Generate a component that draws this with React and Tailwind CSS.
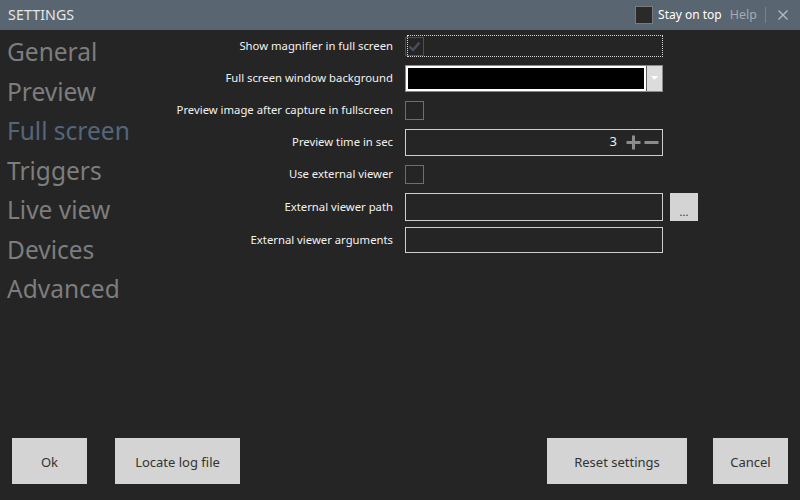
import React from "react";

const font = { fontFamily: '"Noto Sans", "Open Sans", sans-serif' };

function Checkbox({ checked = false, disabled = false }) {
  return (
    <div
      className={
        "w-[19px] h-[19px] border flex items-center justify-center " +
        (disabled ? "border-[#46515c]" : "border-[#6e6e6e]")
      }
    >
      {checked && (
        <svg width="13" height="11" viewBox="0 0 13 11">
          <path d="M1.5 5.5 L5 9 L11.5 1.5" fill="none" stroke="#46515c" strokeWidth="2.4" />
        </svg>
      )}
    </div>
  );
}

function Row({ label, h = "h-[32px]", children }) {
  return (
    <div className={"flex items-center " + h}>
      <div className="w-[224px] text-right text-[11.3px] text-[#f2f2f2] pr-[1px] whitespace-nowrap pt-[1px]">
        {label}
      </div>
      <div className="ml-[11px] flex items-center">{children}</div>
    </div>
  );
}

export default function App() {
  const nav = ["General", "Preview", "Full screen", "Triggers", "Live view", "Devices", "Advanced"];
  return (
    <div className="w-[800px] h-[500px] bg-[#252525] flex flex-col overflow-hidden" style={font}>
      <div className="h-[30px] bg-[#596570] flex items-center shrink-0">
        <div className="pl-[8px] text-[14.2px] text-[#e6e6e6] tracking-[0.1px]">SETTINGS</div>
        <div className="ml-auto flex items-center">
          <div className="w-[18px] h-[18px] bg-[#2a2a2a] border border-[#7a7a7a]" />
          <div className="ml-[5px] text-[12px] text-white">Stay on top</div>
          <div className="ml-[8px] text-[12.5px] text-[#a3acb5]">Help</div>
          <div className="ml-[8px] w-[1px] h-[16px] bg-[#78838e]" />
          <div className="ml-[12px] mr-[12px] text-[#b0b8c0]">
            <svg width="10" height="10" viewBox="0 0 10 10">
              <path d="M0.5 0.5 L9.5 9.5 M9.5 0.5 L0.5 9.5" stroke="#b4bcc4" strokeWidth="1.3" />
            </svg>
          </div>
        </div>
      </div>

      <div className="flex flex-1">
        <div className="w-[170px] pl-[7px] pt-[2px]">
          {nav.map((n) => (
            <div
              key={n}
              className={
                "text-[24.5px] leading-[39.5px] whitespace-nowrap " +
                (n === "Full screen" ? "text-[#55667a]" : "text-[#7d7d7d]")
              }
            >
              {n}
            </div>
          ))}
        </div>

        <div className="flex flex-col">
          <Row label="Show magnifier in full screen">
            <div className="relative w-[258px] h-[22px] flex items-center">
              <Checkbox checked disabled />
              <div className="absolute left-[2px] top-0 w-[256px] h-[22px] border border-dotted border-[#d8d8d8]" />
            </div>
          </Row>
          <Row label="Full screen window background">
            <div className="w-[258px] h-[27px] border border-[#8a8a8a] flex">
              <div className="flex-1 bg-white p-[2px]">
                <div className="w-full h-full bg-black" />
              </div>
              <div className="w-[16px] bg-[#dcdcdc] border-l border-[#606060] flex items-center justify-center">
                <svg width="7" height="5" viewBox="0 0 7 5">
                  <path d="M0 0 L7 0 L3.5 4 Z" fill="#ffffff" />
                </svg>
              </div>
            </div>
          </Row>
          <Row label="Preview image after capture in fullscreen">
            <Checkbox />
          </Row>
          <Row label="Preview time in sec">
            <div className="w-[258px] h-[27px] border border-[#cfcfcf] flex items-center justify-end pr-[3px]">
              <span className="text-[13px] text-[#f0f0f0] mr-[9px]">3</span>
              <svg width="15" height="15" viewBox="0 0 15 15" className="mr-[3px]">
                <path d="M7.5 0.5 V14.5 M0.5 7.5 H14.5" stroke="#8c8c8c" strokeWidth="3" />
              </svg>
              <svg width="15" height="15" viewBox="0 0 15 15">
                <path d="M0.5 7.5 H14.5" stroke="#8c8c8c" strokeWidth="3" />
              </svg>
            </div>
          </Row>
          <Row label="Use external viewer">
            <Checkbox />
          </Row>
          <Row label="External viewer path" h="h-[34px]">
            <div className="w-[258px] h-[28px] border border-[#cfcfcf]" />
            <div className="ml-[7px] w-[28px] h-[28px] bg-[#d4d4d4] flex items-end justify-center pb-[4px]">
              <span className="text-[11px] leading-[11px] text-[#333]">...</span>
            </div>
          </Row>
          <Row label="External viewer arguments">
            <div className="w-[258px] h-[26px] border border-[#cfcfcf]" />
          </Row>
        </div>
      </div>

      <div className="flex items-center px-[12px] pb-[16px] text-[13px] text-[#333]">
        <div className="w-[75px] h-[46px] bg-[#d4d4d4] flex items-center justify-center pt-[3px]">Ok</div>
        <div className="ml-[28px] w-[125px] h-[46px] bg-[#d4d4d4] flex items-center justify-center pt-[3px]">
          Locate log file
        </div>
        <div className="ml-auto w-[140px] h-[46px] bg-[#d4d4d4] flex items-center justify-center pt-[3px]">
          Reset settings
        </div>
        <div className="ml-[26px] w-[75px] h-[46px] bg-[#d4d4d4] flex items-center justify-center pt-[3px]">
          Cancel
        </div>
      </div>
    </div>
  );
}
